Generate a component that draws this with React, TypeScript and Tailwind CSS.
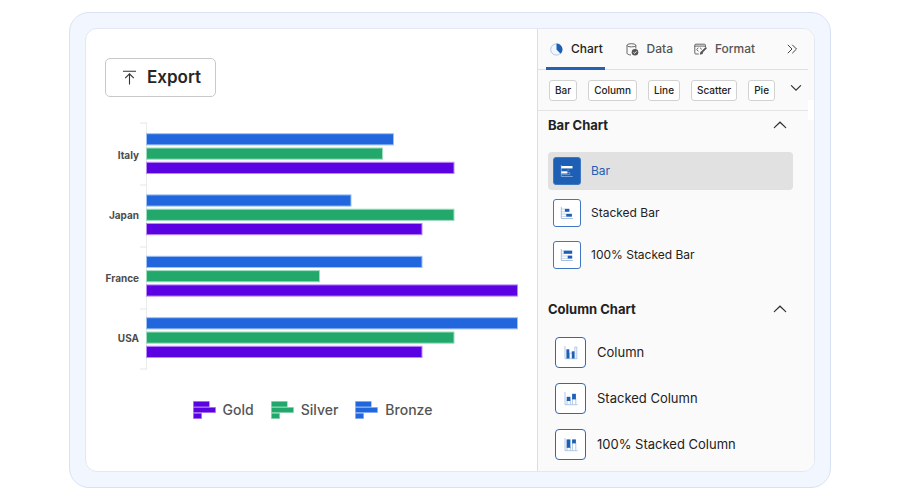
import React from 'react';

const COLORS = {
  bronze: { fill: '#2166dc', stroke: '#9ec1f3' },
  silver: { fill: '#22a86b', stroke: '#9edcc0' },
  gold: { fill: '#5a02e2', stroke: '#b98af5' },
};

type Series = keyof typeof COLORS;

const SERIES: Series[] = ['bronze', 'silver', 'gold'];

const COUNTRIES = [
  { name: 'Italy', top: 11.2, label: 36.5, bronze: 247, silver: 236, gold: 307.5 },
  { name: 'Japan', top: 72.4, label: 96.5, bronze: 204.5, silver: 307.5, gold: 275.5 },
  { name: 'France', top: 133.8, label: 159.5, bronze: 275.5, silver: 173, gold: 371 },
  { name: 'USA', top: 195.2, label: 219.5, bronze: 371, silver: 307.5, gold: 275.5 },
];

const TICKS = [1, 63, 125, 187, 247];

const LEGEND: { label: string; series: Series }[] = [
  { label: 'Gold', series: 'gold' },
  { label: 'Silver', series: 'silver' },
  { label: 'Bronze', series: 'bronze' },
];

const CHART_TYPES = ['Bar', 'Column', 'Line', 'Scatter', 'Pie'];

const MedalChart: React.FC = () => (
  <svg viewBox="0 0 413 248" className="block w-full overflow-visible" role="img" aria-label="Medals by country">
    <path d="M41.5 1V247" stroke="#ebebe9" fill="none" />
    {TICKS.map((y) => (
      <path key={y} d={`M35 ${y}H42`} stroke="#e6e6e2" fill="none" />
    ))}
    {COUNTRIES.map((country) => (
      <g key={country.name}>
        <text x="34" y={country.label} textAnchor="end" className="fill-[#4c4c4c] text-[10px] font-bold">
          {country.name}
        </text>
        {SERIES.map((series, idx) => (
          <rect
            key={series}
            x="41.5"
            y={country.top + idx * 14.3 + 0.5}
            width={country[series]}
            height="11.2"
            fill={COLORS[series].fill}
            stroke={COLORS[series].stroke}
          />
        ))}
      </g>
    ))}
  </svg>
);

const LegendIcon: React.FC<{ series: Series }> = ({ series }) => (
  <svg width="23" height="18" viewBox="0 0 23 18" fill={COLORS[series].fill} stroke={COLORS[series].stroke} strokeWidth="0.5">
    <rect x="0.3" y="0.3" width="16" height="5.6" />
    <rect x="0.3" y="6.3" width="22.3" height="5.4" />
    <rect x="0.3" y="12.2" width="8.4" height="5.5" />
  </svg>
);

const PieIcon = () => (
  <svg width="13" height="13" viewBox="0 0 13 13">
    <circle cx="6.3" cy="6.5" r="5.6" fill="#f2f7fd" stroke="#9dbce4" strokeWidth="0.8" />
    <path d="M6.5 0.5A6 6 0 0 1 10.6 10.8L6.5 6.5Z" fill="#1d5fb4" />
  </svg>
);

const DataIcon = () => (
  <svg width="13" height="13" viewBox="0 0 13 13" fill="none" stroke="#555" strokeWidth="0.9">
    <ellipse cx="5.4" cy="2.3" rx="4.4" ry="1.6" />
    <path d="M1 2.3V10.2C1 11.2 2.8 11.9 5 11.9M9.8 2.3V5.6" />
    <circle cx="9" cy="9.2" r="3.3" fill="#555" stroke="none" />
    <path d="M7.4 9.3L8.6 10.4L10.6 8.2" stroke="#fafafa" />
  </svg>
);

const FormatIcon = () => (
  <svg width="13" height="13" viewBox="0 0 13 13" fill="none" stroke="#555" strokeWidth="0.9" strokeLinecap="round" strokeLinejoin="round">
    <path d="M11.4 3.8V2.2Q11.4 1.2 10.4 1.2H1.8Q0.8 1.2 0.8 2.2V10Q0.8 11 1.8 11H4.4M0.8 3.1H11.4" />
    <path d="M4.1 5L2.7 6.6L4.1 8.1M6.3 5L7.5 6.1" />
    <path d="M11.8 5.2L8.6 8.4" strokeWidth="1.9" />
    <path d="M7.9 8.3Q5.8 8.5 5.9 11.5Q9 11.9 9.2 9.6Z" fill="#555" stroke="none" />
  </svg>
);

const DoubleChevron = () => (
  <svg width="12" height="12" viewBox="0 0 12 12" fill="none" stroke="#444" strokeWidth="1">
    <path d="M1.8 1.8L6 6L1.8 10.2M6.3 1.8L10.5 6L6.3 10.2" />
  </svg>
);

const Chevron: React.FC<{ up?: boolean }> = ({ up }) => (
  <svg width="14" height="8" viewBox="0 0 14 8" fill="none" stroke="#333" strokeWidth="1.2" strokeLinecap="round">
    <path d={up ? 'M1.3 6.6L7 1.2L12.7 6.6' : 'M2.4 1.6L7 6.2L11.6 1.6'} />
  </svg>
);

const BarGlyph = () => (
  <svg width="14" height="14" viewBox="0 0 14 14" fill="none">
    <path d="M1.3 1V12.5H12.8" stroke="#8fb3e3" strokeWidth="0.8" />
    <path d="M7.3 6.2H9.2M1.8 10.6H9.8V8.6H7" stroke="#8fb3e3" strokeWidth="0.6" />
    <rect x="1.3" y="2" width="11.2" height="2.4" fill="#fff" />
    <rect x="1.3" y="7.3" width="6" height="2.2" fill="#fff" />
  </svg>
);

const StackedBarGlyph = () => (
  <svg width="14" height="14" viewBox="0 0 14 14" fill="none">
    <path d="M1.3 1V12.5H12.8" stroke="#8fb0d8" strokeWidth="0.8" />
    <path d="M1.3 3H5V5.8H1.3M1.3 8H6.4V10.4H1.3" stroke="#9dbbe0" strokeWidth="0.6" />
    <rect x="5" y="2.8" width="4.4" height="3" fill="#1d5fb4" />
    <rect x="6.3" y="7.8" width="5.6" height="2.9" fill="#1d5fb4" />
  </svg>
);

const FullBarGlyph = () => (
  <svg width="14" height="14" viewBox="0 0 14 14" fill="none">
    <path d="M1.3 1V12.5H12.8" stroke="#8fb0d8" strokeWidth="0.8" />
    <path d="M1.3 3H4V5.8H1.3M1.3 8H8V10.4H1.3" stroke="#9dbbe0" strokeWidth="0.6" />
    <rect x="3.8" y="2.6" width="8.4" height="3.2" fill="#1d5fb4" />
    <rect x="7.8" y="7.6" width="4.4" height="3" fill="#1d5fb4" />
  </svg>
);

const ColumnGlyph = () => (
  <svg width="14" height="15" viewBox="0 0 14 15" fill="none">
    <path d="M1 1V13.7H13.5" stroke="#9dbbe0" strokeWidth="0.8" />
    <path d="M5.5 13.5V8.2H8M10.8 13.5V2H12.8V13.5" stroke="#9dbbe0" strokeWidth="0.8" />
    <rect x="2.4" y="4.3" width="2.9" height="9.2" fill="#1d5fb4" />
    <rect x="7.8" y="6.3" width="2.7" height="7.2" fill="#1d5fb4" />
  </svg>
);

const StackedColumnGlyph = () => (
  <svg width="14" height="15" viewBox="0 0 14 15" fill="none">
    <path d="M1 1V13.7H13.5" stroke="#9dbbe0" strokeWidth="0.8" />
    <path d="M3 9.5V13.5M6.3 9.5V13.5M8.4 7.5V13.5M11.8 7.5V13.5" stroke="#9dbbe0" strokeWidth="0.8" />
    <rect x="2.7" y="5.8" width="3.7" height="4.2" fill="#1d5fb4" />
    <rect x="8.1" y="2.8" width="3.8" height="5.6" fill="#1d5fb4" />
  </svg>
);

const FullColumnGlyph = () => (
  <svg width="14" height="15" viewBox="0 0 14 15" fill="none">
    <path d="M1 1V13.7H13.5" stroke="#9dbbe0" strokeWidth="0.8" />
    <path d="M3 10V13.5M6.3 10V13.5M8.4 6V13.5M11.8 6V13.5" stroke="#9dbbe0" strokeWidth="0.8" />
    <rect x="2.6" y="2.4" width="3.8" height="8.4" fill="#1d5fb4" />
    <rect x="8.1" y="2.4" width="3.8" height="4" fill="#1d5fb4" />
  </svg>
);

const BAR_ITEMS = [
  { label: 'Bar', glyph: <BarGlyph />, selected: true },
  { label: 'Stacked Bar', glyph: <StackedBarGlyph />, selected: false },
  { label: '100% Stacked Bar', glyph: <FullBarGlyph />, selected: false },
];

const COLUMN_ITEMS = [
  { label: 'Column', glyph: <ColumnGlyph /> },
  { label: 'Stacked Column', glyph: <StackedColumnGlyph /> },
  { label: '100% Stacked Column', glyph: <FullColumnGlyph /> },
];

const SectionHeader: React.FC<{ title: string }> = ({ title }) => (
  <button type="button" aria-expanded="true" className="flex w-full items-center justify-between pr-1.5 text-left">
    <span className="text-[13px] leading-5 font-bold text-[#222]">{title}</span>
    <Chevron up />
  </button>
);

const App: React.FC = () => {
  return (
    <div className="flex min-h-screen bg-white px-[69px] py-3 font-['Inter',sans-serif]">
      <div className="flex w-full rounded-[20px] border border-[#d9e2f5] bg-[#f2f6fe] p-[15px]">
        <div className="flex w-full overflow-hidden rounded-xl border border-[#e2e7f2] bg-white">
          {/* Chart */}
          <main className="flex min-w-0 flex-1 flex-col items-start px-[19px] pt-[29px]">
            <button type="button" className="flex h-[39px] items-center gap-2.5 rounded-[5px] border border-[#c9c9c9] bg-white pr-3.5 pl-4 text-[17px] font-semibold text-[#262626]">
              <svg width="15" height="15" viewBox="0 0 15 15" fill="none" stroke="#333" strokeWidth="1.1">
                <path d="M1 1.2H14M7.5 14.5V4.2M3.2 8.2L7.5 3.8L11.8 8.2" />
              </svg>
              Export
            </button>
            <div className="mt-[25px] w-full">
              <MedalChart />
            </div>
            <ul className="mt-[30px] flex w-full justify-center gap-[17px] pl-0.5">
              {LEGEND.map((item) => (
                <li key={item.label} className="flex items-center gap-[7px] text-sm leading-5 font-medium text-[#555]">
                  <LegendIcon series={item.series} />
                  {item.label}
                </li>
              ))}
            </ul>
          </main>

          {/* Settings panel */}
          <aside className="relative w-[277px] shrink-0 border-l border-[#dedede] bg-[#fafafa]">
            <div className="mr-1.5 flex h-[41px] items-stretch justify-between border-b border-[#e0e0e0] pr-2.5 pl-2 text-xs font-medium text-[#555]">
              <button type="button" className="-mb-px flex items-center gap-2 border-b-3 border-[#2460b4] pt-0.5 pr-0.5 pl-1 text-[#222]">
                <PieIcon />
                Chart
              </button>
              <button type="button" className="flex items-center gap-2">
                <DataIcon />
                Data
              </button>
              <button type="button" className="flex items-center gap-2">
                <FormatIcon />
                Format
              </button>
              <button type="button" aria-label="More tabs" className="ml-2.5">
                <DoubleChevron />
              </button>
            </div>

            <div className="mr-1.5 flex h-[41px] items-center gap-[11px] border-b border-[#e4e4e4] pr-[5px] pl-[11px]">
              {CHART_TYPES.map((type) => (
                <button key={type} type="button" className="h-[21px] rounded-[3px] border border-[#d2d2d2] bg-white px-[5px] text-[10px] leading-none font-medium text-[#222]">
                  {type}
                </button>
              ))}
              <button type="button" aria-label="More chart types" className="ml-auto pb-1">
                <Chevron />
              </button>
            </div>
            <div className="absolute top-[71px] right-0 h-5 w-1.5 bg-white"></div>

            <div className="pt-1 pr-[21px] pl-2.5">
              <section>
                <SectionHeader title="Bar Chart" />
                <ul className="mt-[17px] space-y-1">
                  {BAR_ITEMS.map((item) => (
                    <li key={item.label}>
                      <button
                        type="button"
                        className={`flex h-[38px] w-full items-center gap-2.5 rounded-sm px-[5px] text-left text-xs ${item.selected ? 'bg-[#e1e1e1] text-[#2460b4]' : 'text-[#222]'}`}
                      >
                        <span className={`flex h-7 w-7 items-center justify-center rounded-[3px] border border-[#3f77c2] ${item.selected ? 'bg-[#1d5fb4]' : 'bg-white'}`}>
                          {item.glyph}
                        </span>
                        {item.label}
                      </button>
                    </li>
                  ))}
                </ul>
              </section>

              <section className="mt-[25px]">
                <SectionHeader title="Column Chart" />
                <ul className="mt-[18px] space-y-[15px]">
                  {COLUMN_ITEMS.map((item) => (
                    <li key={item.label}>
                      <button type="button" className="flex w-full items-center gap-[11px] pl-[7px] text-left text-[13px] text-[#222]">
                        <span className="flex h-[31px] w-[31px] items-center justify-center rounded-sm border border-[#2f68b4] bg-white">
                          {item.glyph}
                        </span>
                        {item.label}
                      </button>
                    </li>
                  ))}
                </ul>
              </section>
            </div>
          </aside>
        </div>
      </div>
    </div>
  );
};

export default App;
